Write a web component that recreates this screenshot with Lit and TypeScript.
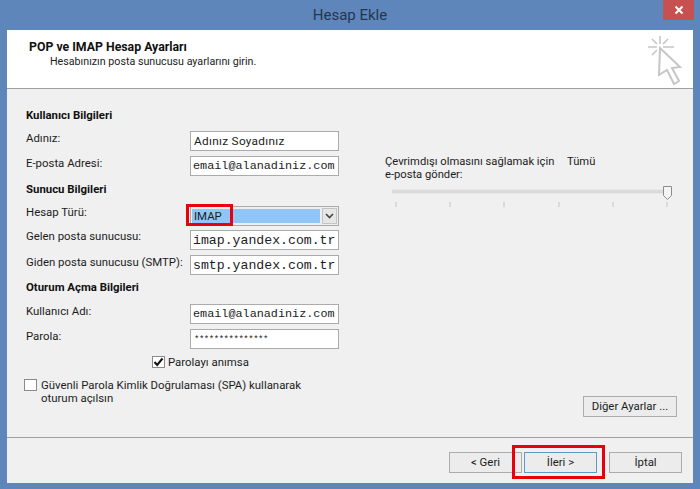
import { LitElement, html, css, svg } from "lit";
import { customElement } from "lit/decorators.js";

@customElement("app-root")
export class AppRoot extends LitElement {
  static styles = css`
    :host { display: block; width: 700px; height: 489px; overflow: hidden; background: #5f86bb; font-family: Roboto, sans-serif; font-size: 11.4px; color: #1c1c1c; position: relative; }
    .win { display: flex; flex-direction: column; height: 489px; box-sizing: border-box; padding: 0 7px 6px 7px; }
    .title { height: 30px; flex: none; display: flex; align-items: center; justify-content: center; font-size: 15px; color: #24364f; }
    .close { position: absolute; right: 6px; top: 0; width: 31px; height: 20px; background: #c75050; display: flex; align-items: center; justify-content: center; }
    .client { flex: 1; display: flex; flex-direction: column; background: #f0f0f0; min-height: 0; }
    .head { height: 58px; flex: none; background: #fff; border-bottom: 1px solid #a0a0a0; display: flex; justify-content: space-between; }
    .head-text { padding: 10px 0 0 22px; line-height: 15px; }
    .head-title { font-weight: 700; font-size: 12.3px; color: #111; }
    .head-sub { padding-left: 21px; font-size: 10.7px; line-height: 14px; }
    .wand { margin: 2px 11px 0 0; }
    .main { flex: 1; display: flex; padding: 18px 16px 20px 19px; min-height: 0; }
    .left { width: 313px; flex: none; display: flex; flex-direction: column; }
    .h { height: 24px; font-weight: 700; line-height: 16px; color: #111; }
    .h.up { line-height: 14px; }
    .row { height: 25px; display: flex; justify-content: space-between; }
    .lbl { line-height: 14px; white-space: nowrap; }
    .lbl.up { line-height: 12px; }
    .inp { width: 149px; height: 20px; box-sizing: border-box; border: 1px solid #ababab; background: #fff; padding: 0 2px; line-height: 19px; white-space: nowrap; overflow: hidden; }
    .sans { letter-spacing: 0.3px; padding-left: 3px; font-size: 11.8px; }
    .m12 { font-family: "Liberation Mono", monospace; font-size: 11.8px; }
    .m13 { font-family: "Liberation Mono", monospace; font-size: 13.2px; }
    .pw { font-family: "Liberation Mono", monospace; font-size: 9px; letter-spacing: -0.47px; padding-left: 3px; line-height: 21px; }
    .combo { width: 149px; height: 20px; box-sizing: border-box; margin-top: 1px; border: 1px solid #ababab; background: #eee; position: relative; display: flex; align-items: center; padding: 1px; gap: 2px; }
    .sel { flex: 1; height: 14px; background: #90c6f7; line-height: 14px; padding-left: 2px; }
    .arrow { width: 15px; height: 16px; display: flex; align-items: center; justify-content: center; background: #e6e6e6; border: 1px solid #c4c4c4; box-sizing: border-box; }
    .mark { position: absolute; left: -5px; top: -3px; width: 47px; height: 22px; box-sizing: border-box; border: 3px solid #e8000d; }
    .remember { display: flex; align-items: center; gap: 3px; margin: 1px 0 0 126px; height: 13px; }
    .box { width: 13px; height: 12px; box-sizing: border-box; flex: none; border: 1px solid #8a8a8a; background: #fff; display: flex; align-items: center; justify-content: center; }
    .spa { display: flex; gap: 4px; margin: 11px 0 0 -2px; line-height: 13px; }
    .right { flex: 1; display: flex; flex-direction: column; margin-left: 46px; padding-top: 48px; }
    .off { display: flex; line-height: 13px; font-size: 11.2px; }
    .off-a { width: 182px; flex: none; }
    .slider { height: 30px; margin: 3px 0 0 7px; display: block; }
    .btn { height: 21px; box-sizing: border-box; border: 1px solid #acacac; background: #ececec; display: flex; align-items: center; justify-content: center; line-height: 1; }
    .more { width: 94px; margin-top: auto; align-self: flex-end; }
    .foot { height: 31px; flex: none; border-top: 1px solid #a0a0a0; display: flex; justify-content: flex-end; padding: 14px 11px 0 0; }
    .foot .btn { width: 73px; }
    .next { border-color: #5a9bc9; position: relative; margin: 0 12px 0 2px; }
    .mark2 { position: absolute; left: -13px; top: -8px; width: 93px; height: 34px; box-sizing: border-box; border: 3px solid #e8000d; }
  `;

  private wand() {
    return svg`<svg class="wand" width="52" height="56" viewBox="0 0 52 56" fill="none" stroke="#c6c6c6" stroke-width="1.6">
      <path d="M30 4V12M18 15H27M33 15H44M22 7L27 12M38 7L33 12M22 23L27 18"/>
      <path d="M30 16L50 35L42 36L49 49L44 52L37 38L29 43Z" stroke-width="2" fill="#fff"/>
    </svg>`;
  }

  render() {
    const ticks = [4, 58, 112, 167, 221, 275];
    return html`<div class="win">
      <div class="title">Hesap Ekle</div>
      <div class="close"><svg width="10" height="10" viewBox="0 0 10 10"><path d="M1.5 1.5L8.5 8.5M8.5 1.5L1.5 8.5" stroke="#fff" stroke-width="2"/></svg></div>
      <div class="client">
        <div class="head">
          <div class="head-text">
            <div class="head-title">POP ve IMAP Hesap Ayarları</div>
            <div class="head-sub">Hesabınızın posta sunucusu ayarlarını girin.</div>
          </div>
          ${this.wand()}
        </div>
        <div class="main">
          <div class="left">
            <div class="h">Kullanıcı Bilgileri</div>
            <div class="row"><span class="lbl">Adınız:</span><div class="inp sans">Adınız Soyadınız</div></div>
            <div class="row"><span class="lbl">E-posta Adresi:</span><div class="inp m12">email@alanadiniz.com</div></div>
            <div class="h">Sunucu Bilgileri</div>
            <div class="row"><span class="lbl">Hesap Türü:</span>
              <div class="combo"><div class="sel">IMAP</div>
                <div class="arrow"><svg width="9" height="6" viewBox="0 0 9 6"><path d="M1 1L4.5 4.5L8 1" fill="none" stroke="#444" stroke-width="1.6"/></svg></div>
                <div class="mark"></div></div></div>
            <div class="row"><span class="lbl up">Gelen posta sunucusu:</span><div class="inp m13">imap.yandex.com.tr</div></div>
            <div class="row"><span class="lbl">Giden posta sunucusu (SMTP):</span><div class="inp m13">smtp.yandex.com.tr</div></div>
            <div class="h up">Oturum Açma Bilgileri</div>
            <div class="row"><span class="lbl">Kullanıcı Adı:</span><div class="inp m12">email@alanadiniz.com</div></div>
            <div class="row"><span class="lbl">Parola:</span><div class="inp pw">***************</div></div>
            <div class="remember"><div class="box"><svg width="11" height="10" viewBox="0 0 11 10"><path d="M1.5 5L4.2 8L9.5 1.5" fill="none" stroke="#111" stroke-width="2"/></svg></div><span>Parolayı anımsa</span></div>
            <div class="spa"><div class="box"></div><span>Güvenli Parola Kimlik Doğrulaması (SPA) kullanarak<br>oturum açılsın</span></div>
          </div>
          <div class="right">
            <div class="off"><span class="off-a">Çevrimdışı olmasını sağlamak için<br>e-posta gönder:</span><span>Tümü</span></div>
            <svg class="slider" width="284" height="30" viewBox="0 0 284 30">
              <rect x="0" y="6" width="272" height="3" fill="#dcdcdc" stroke="#d2d2d2" stroke-width="0.5"/>
              ${ticks.map((x) => svg`<path d="M${x} 18V23" stroke="#c4c4c4" stroke-width="1"/>`)}
              <path d="M271.5 2.5H279.5V11.5L275.5 15.5L271.5 11.5Z" fill="#f4f4f4" stroke="#8c8c8c"/>
            </svg>
            <div class="btn more">Diğer Ayarlar ...</div>
          </div>
        </div>
        <div class="foot">
          <div class="btn">&lt; Geri</div>
          <div class="btn next">İleri &gt;<div class="mark2"></div></div>
          <div class="btn">İptal</div>
        </div>
      </div>
    </div>`;
  }
}
